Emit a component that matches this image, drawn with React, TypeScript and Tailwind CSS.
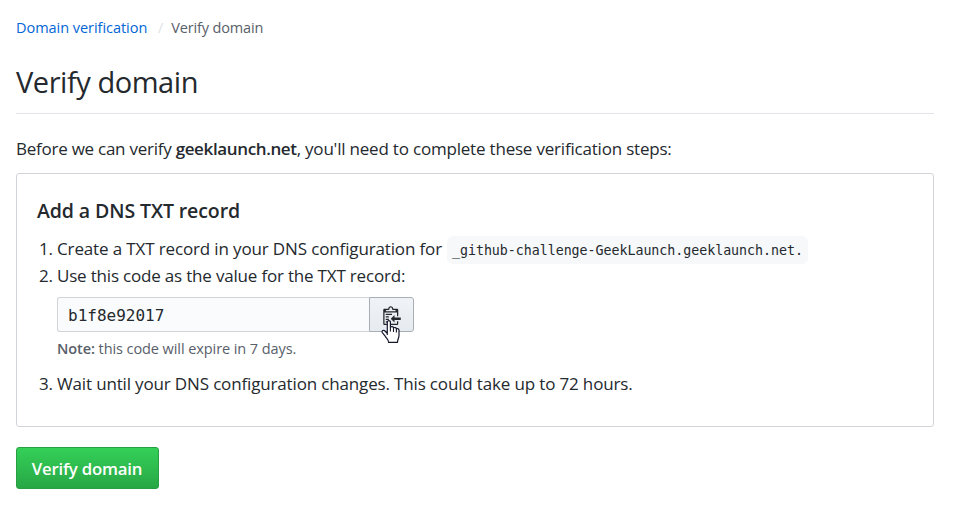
function ClippyIcon() {
  return (
    <svg width="18" height="20" viewBox="0 0 14 16" fill="#24292e" aria-hidden="true">
      <path
        fillRule="evenodd"
        d="M2 13h4v1H2v-1zm5-6H2v1h5V7zm2 3V8l-3 3 3 3v-2h5v-2H9zM4.500 9H2v1h2.500V9zM2 12h2.500v-1H2v1zm9 1h1v2c-.02.28-.11.52-.3.700-.19.180-.42.280-.7.300H1c-.55 0-1-.45-1-1V4c0-.55.45-1 1-1h3c0-1.110.89-2 2-2 1.110 0 2 .89 2 2h3c.55 0 1 .45 1 1v5h-1V6H1v9h10v-2zM2 5h8c0-.55-.45-1-1-1H8c-.55 0-1-.45-1-1s-.45-1-1-1-1 .45-1 1-.45 1-1 1H3c-.55 0-1 .45-1 1z"
      />
    </svg>
  );
}

function HandCursor() {
  return (
    <svg
      className="pointer-events-none absolute left-[11px] top-[21px]"
      width="19"
      height="25"
      viewBox="0 0 19 25"
      aria-hidden="true"
    >
      <path
        d="M6.300 15.500V3.300C6.300 1.100 9.400 1.100 9.400 3.300V8C10.500 7.200 12.300 7.500 12.500 8.800C13.600 8.200 15.200 8.500 15.400 9.800C16.600 9.200 18 9.800 18 11.300V16.500C18 19 16.500 20.300 16.500 23.300H7.500C7.500 20.700 5.500 19.500 4.200 17.200L1.300 13.600C.4 11.800 2.600 10.500 4 12L6.300 14.500Z"
        fill="#fff"
        stroke="#15172b"
        strokeWidth="1.200"
        strokeLinejoin="round"
      />
      <path d="M9.400 8v4.500M12.500 9v4M15.400 10v3.500" fill="none" stroke="#15172b" strokeWidth="1.100" />
    </svg>
  );
}

export default function App() {
  return (
    <main className="h-[528px] w-full bg-white pl-4 pr-[27px] pt-[17px] font-['Open_Sans','Noto_Sans',sans-serif] text-[17px] leading-[26px] tracking-[-0.17px] text-[#24292e]">
      <nav className="flex h-[22px] text-[14.5px] leading-[22px] tracking-[-0.04px]">
        <a className="text-[#0366d6]">Domain verification</a>
        <span className="w-[24px] pl-[3px] text-center text-[#dfe2e5]">/</span>
        <span className="tracking-[-0.15px] text-[#586069]">Verify domain</span>
      </nav>

      <h1 className="mt-[21px] h-[54px] border-b border-[#e1e4e8] text-[29px] leading-[44px] tracking-[-0.45px]">
        Verify domain
      </h1>

      <p className="mt-[22px] tracking-[-0.2px]">
        <span className="tracking-[-0.25px]">Before we can verify </span>
        <strong className="font-semibold tracking-[-0.37px]">geeklaunch.net</strong>, you'll need to complete these
        verification steps:
      </p>

      <section className="mt-[11px] h-[254px] rounded-[3px] border border-[#d1d5da] px-5 pt-[23px]">
        <h3 className="text-[19.5px] font-semibold leading-[28px] tracking-[-0.1px]">Add a DNS TXT record</h3>
        <ol className="mt-[11px]">
          <li className="flex h-[27px]">
            <span className="w-5 pl-[2px]">1.</span>
            <span className="tracking-[-0.14px]">Create a TXT record in your DNS configuration for</span>
            <code className="ml-[5px] h-[28px] rounded-[6px] bg-[#f6f8fa] px-[5px] pt-px font-['DejaVu_Sans_Mono','Liberation_Mono',monospace] text-[13.3px] leading-[28px] tracking-[-0.03px]">
              _github-challenge-GeekLaunch.geeklaunch.net.
            </code>
          </li>
          <li className="flex">
            <span className="w-5 pl-[2px]">2.</span>
            <div>
              <p className="tracking-[-0.19px]">Use this code as the value for the TXT record:</p>
              <div className="mt-[8px] flex h-[35px] w-[357px]">
                <div className="flex-1 rounded-l-[3px] border border-r-0 border-[#d1d5da] bg-[#fafbfc] pl-[10px] pt-px font-['DejaVu_Sans_Mono','Liberation_Mono',monospace] text-[16px] leading-[34px] tracking-normal">
                  b1f8e92017
                </div>
                <button className="relative flex w-[45px] items-center justify-center rounded-r-[3px] border border-[#a8aeb5] bg-linear-to-b from-[#f0f3f6] to-[#e6ebf1]">
                  <ClippyIcon />
                  <HandCursor />
                </button>
              </div>
              <p className="mt-[6px] text-[14.5px] leading-[22px] tracking-[-0.08px] text-[#586069]">
                <strong className="font-semibold">Note:</strong> this code will expire in 7 days.
              </p>
            </div>
          </li>
          <li className="mt-[11px] flex">
            <span className="w-5 pl-[2px]">3.</span>
            <span className="tracking-[-0.155px]">
              Wait until your DNS configuration changes. This could take up to 72 hours.
            </span>
          </li>
        </ol>
      </section>

      <button className="mt-5 flex h-[42px] w-[143px] items-center justify-center rounded-[3px] border border-[#279f43] bg-linear-to-b from-[#34d058] to-[#28a745] pr-px pt-px text-[16.75px] font-semibold tracking-[-0.2px] text-white">
        Verify domain
      </button>
    </main>
  );
}
